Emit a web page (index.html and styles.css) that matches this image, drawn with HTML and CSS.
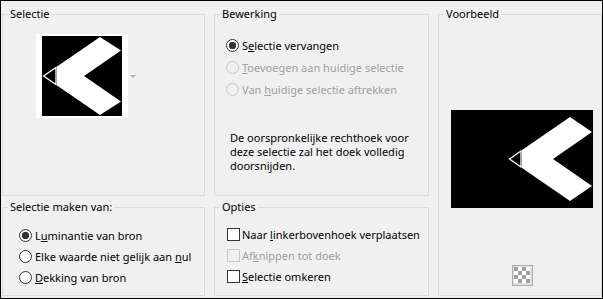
FILE: index.html
```html
<!DOCTYPE html>
<html>
<head>
<meta charset="utf-8">
<meta name="viewport" content="width=device-width, initial-scale=1">
<link rel="stylesheet" href="styles.css">
</head>
<body>
<div class="window">

  <!-- Selectie: thumbnail of the source -->
  <section class="group sel">
    <span class="group-title">Selectie</span>
    <div class="thumb-row">
      <div class="thumb">
        <svg width="80" height="80" viewBox="0 0 80 80">
          <rect width="80" height="80" fill="#000"/>
          <polygon points="15,30.4 58,1 79,14.5 42,40 79,65.5 58,79 15,49.6" fill="#fff"/>
          <polygon points="1.5,40 14,31.4 14,48.6" fill="none" stroke="#fff" stroke-width="1.3"/>
        </svg>
      </div>
      <span class="drop-arrow"></span>
    </div>
  </section>

  <!-- Bewerking -->
  <section class="group edit">
    <span class="group-title">Bewerking</span>
    <label class="row"><input type="radio" name="mode" checked><span>S<u>e</u>lectie vervangen</span></label>
    <label class="row off"><input type="radio" name="mode" disabled><span><u>T</u>oevoegen aan huidige selectie</span></label>
    <label class="row off"><input type="radio" name="mode" disabled><span>Van <u>h</u>uidige selectie aftrekken</span></label>
    <p class="note">De oorspronkelijke rechthoek voor<br>deze selectie zal het doek volledig<br>doorsnijden.</p>
  </section>

  <!-- Voorbeeld -->
  <section class="group preview">
    <span class="group-title">Voorbeeld</span>
    <svg class="preview-img" width="142" height="98" viewBox="0 0 142 98">
      <rect width="142" height="98" fill="#000"/>
      <polygon points="71,40 119,7 141,22 102,49 141,76 119,91 71,58" fill="#fff"/>
      <polygon points="58.5,49 70,41 70,57" fill="none" stroke="#fff" stroke-width="1.3"/>
    </svg>
    <button class="checker-btn" title="Transparantie"><span class="checker"></span></button>
  </section>

  <!-- Selectie maken van -->
  <section class="group source">
    <span class="group-title">Selectie maken van:</span>
    <label class="row"><input type="radio" name="src" checked><span>L<u>u</u>minantie van bron</span></label>
    <label class="row"><input type="radio" name="src"><span>Elke waarde niet gelijk aan <u>n</u>ul</span></label>
    <label class="row"><input type="radio" name="src"><span><u>D</u>ekking van bron</span></label>
  </section>

  <!-- Opties -->
  <section class="group options">
    <span class="group-title">Opties</span>
    <label class="row"><input type="checkbox"><span>Naar <u>l</u>inkerbovenhoek verplaatsen</span></label>
    <label class="row off"><input type="checkbox" disabled><span>Af<u>k</u>nippen tot doek</span></label>
    <label class="row"><input type="checkbox"><span><u>S</u>electie omkeren</span></label>
  </section>

</div>
</body>
</html>
```

FILE: styles.css
```css
/* Dialog window */
body {
  margin: 0;
  font-family: "Noto Sans", sans-serif;
  font-size: 11px;
  color: #000;
}

.window {
  width: 603px;
  height: 299px;
  box-sizing: border-box;
  border: 1px solid #000;
  background-color: #f0f0f0;
  padding: 13px 0 0 1px;
  display: grid;
  grid-template-columns: 203px 215px 164px;
  grid-template-rows: 182px 89px;
  column-gap: 9px;
  row-gap: 11px;
}

/* Group boxes */
.group {
  position: relative;
  border: 1px solid #dcdcdc;
  box-sizing: border-box;
}

.group-title {
  position: absolute;
  top: -9px;
  left: 5px;
  padding: 0 2px;
  line-height: 16px;
  background-color: #f0f0f0;
  white-space: nowrap;
}

.sel { grid-column: 1; grid-row: 1; }
.edit { grid-column: 2; grid-row: 1; padding: 19px 0 0 11px; }
.preview { grid-column: 3; grid-row: 1 / span 2; }
.source { grid-column: 1; grid-row: 2; padding: 17px 0 0 16px; }
.options { grid-column: 2; grid-row: 2; padding: 16px 0 0 12px; }

/* Thumbnail */
.thumb-row {
  display: flex;
  align-items: center;
  gap: 2px;
  margin: 19px 0 0 33px;
}

.thumb {
  width: 92px;
  height: 84px;
  box-sizing: border-box;
  padding: 2px 6px;
  background-color: #fff;
}

.thumb svg {
  display: block;
}

.drop-arrow {
  width: 0;
  height: 0;
  border-left: 3px solid transparent;
  border-right: 3px solid transparent;
  border-top: 3px solid #b4b4b4;
}

/* Radio and checkbox rows */
.row {
  display: flex;
  align-items: center;
  gap: 3px;
  height: 22px;
  white-space: nowrap;
}

.source .row,
.options .row {
  height: 21px;
}

.row input {
  appearance: none;
  -webkit-appearance: none;
  margin: 0;
  width: 13px;
  height: 13px;
  border: 1px solid #333;
  background-color: #fff;
  flex: none;
}

.row input[type=radio] {
  border-radius: 50%;
}

.row input[type=radio]:checked {
  background: radial-gradient(circle, #333 0 3.4px, #fff 4px);
}

.options .row {
  gap: 2px;
}

.row.off {
  color: #a0a0a0;
}

.row.off input {
  border-color: #c8c8c8;
  background-color: #f0f0f0;
}

.note {
  margin: 31px 0 0 4px;
  line-height: 14px;
}

/* Preview */
.preview {
  display: flex;
  flex-direction: column;
  align-items: center;
  padding: 95px 0 0 4px;
}

.preview-img {
  display: block;
}

.checker-btn {
  margin-top: 57px;
  width: 21px;
  height: 21px;
  box-sizing: border-box;
  padding: 1px 2px 2px 1px;
  border: 1px solid #adadad;
  background-color: #e1e1e1;
}

.checker {
  display: block;
  width: 16px;
  height: 16px;
  background: repeating-conic-gradient(#fff 0 25%, #a0a0a0 0 50%) 0 0 / 8px 8px;
}
```
